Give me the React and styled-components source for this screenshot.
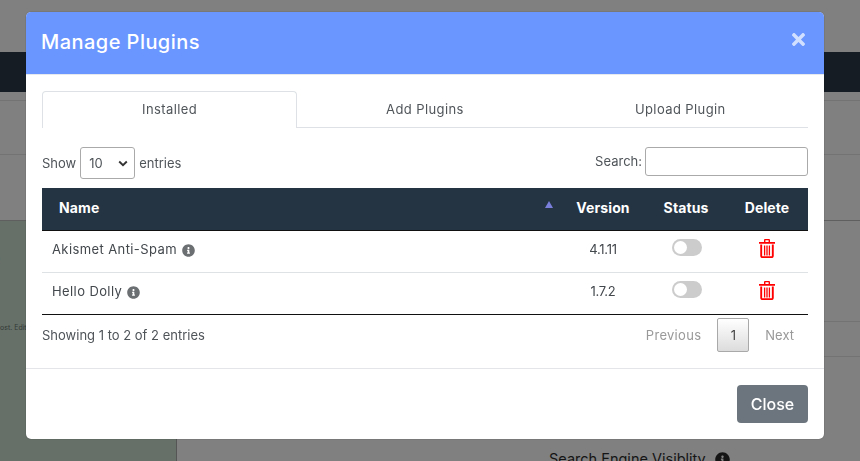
import React from "react";
import styled, { createGlobalStyle } from "styled-components";
import { FaInfoCircle, FaTimes } from "react-icons/fa";

const GlobalStyle = createGlobalStyle`
	html, body {
		margin: 0;
		padding: 0;
		height: 100%;
		overflow: hidden;
		background: #808080;
		font-family: Inter, "Noto Sans", sans-serif;
	}
`;

// Page behind the dimmed backdrop
const Page = styled.div`
	height: 461px;
	padding-top: 52px;
	box-sizing: border-box;
	background: #808080;
	display: flex;
	flex-direction: column;
	overflow: hidden;
`;

const NavBar = styled.div`
	flex: none;
	height: 40px;
	background: #151c23;
`;

const PageStrip = styled.div`
	flex: none;
	height: ${(p) => p.$height}px;
	border-bottom: 1px solid #737373;
`;

const PageBody = styled.div`
	flex: none;
	height: 240px;
	margin-top: 65px;
	display: flex;
	border-top: 1px solid #5f5f5f;
`;

const SidePanel = styled.div`
	flex: none;
	width: 177px;
	background: #667069;
	border-right: 1px solid #555;
	font-size: 7px;
	line-height: 9px;
	color: #333a36;
	padding-top: 32px;
	box-sizing: border-box;
	white-space: nowrap;
	overflow: hidden;
`;

const PanelText = styled.div`
	margin-top: ${(p) => p.$gap || 0}px;
	margin-left: ${(p) => p.$indent || 0}px;
`;

const PageMain = styled.div`
	flex: 1;
	display: flex;
	flex-direction: column;
`;

const MainLine = styled.div`
	flex: none;
	height: ${(p) => p.$height}px;
	border-bottom: 1px solid #737373;
`;

const VisibilityLabel = styled.div`
	margin: 92px 0 0 372px;
	display: flex;
	align-items: center;
	gap: 9px;
	font-size: 14.5px;
	line-height: 20px;
	color: #151515;
	white-space: nowrap;
`;

// Modal
const Overlay = styled.div`
	position: fixed;
	inset: 0;
`;

const Modal = styled.div`
	position: absolute;
	left: 26px;
	top: 12px;
	width: 798px;
	height: 427px;
	background: #fff;
	border-radius: 5px;
	overflow: hidden;
	box-shadow: 0 0 1px rgba(0, 0, 0, 0.6);
	display: flex;
	flex-direction: column;
	color: #4f5459;
`;

const ModalHeader = styled.div`
	flex: none;
	height: 63px;
	background: #6a96ff;
	display: flex;
	justify-content: space-between;
	padding: 0 16px 0 15px;
	border-bottom: 1px solid #e6e9ee;
	box-sizing: border-box;
`;

const ModalTitle = styled.h4`
	margin: 0;
	font-size: 20px;
	font-weight: 500;
	line-height: 61px;
	color: #fff;
	letter-spacing: 0.45px;
`;

const CloseX = styled.button`
	border: 0;
	padding: 0;
	background: none;
	color: rgba(255, 255, 255, 0.7);
	height: 19px;
	margin-top: 18px;
	font-size: 19px;
	display: flex;
`;

const ModalBody = styled.div`
	flex: none;
	height: 294px;
	padding: 16px 16px 0;
	box-sizing: border-box;
	border-bottom: 1px solid #e3e5e8;
`;

const Tabs = styled.div`
	display: grid;
	grid-template-columns: repeat(3, 1fr);
	height: 37px;
	border-bottom: 1px solid #dee2e6;
	box-sizing: border-box;
`;

const Tab = styled.div`
	display: flex;
	align-items: center;
	justify-content: center;
	font-size: 13px;
	letter-spacing: 0.4px;
	color: #50555a;
	height: ${(p) => (p.$active ? "37px" : "36px")};
	box-sizing: border-box;
	${(p) =>
		p.$active &&
		`
		background: #fff;
		border: 1px solid #dee2e6;
		border-bottom: 0;
		border-radius: 4px 4px 0 0;
		padding-bottom: 2px;
	`}
`;

const Controls = styled.div`
	display: flex;
	justify-content: space-between;
	margin-top: 19px;
	height: 41px;
	font-size: 13px;
`;

const LengthLabel = styled.label`
	display: flex;
	align-items: center;
	gap: 4px;
	height: 32px;
`;

const FakeSelect = styled.div`
	width: 55px;
	height: 32px;
	box-sizing: border-box;
	border: 1px solid #aaa;
	border-radius: 3px;
	padding: 0 6px 0 8px;
	display: flex;
	align-items: center;
	justify-content: space-between;
	font-size: 13px;
`;

const SearchLabel = styled.label`
	display: flex;
	align-items: flex-start;
	gap: 3px;
	line-height: 28px;
`;

const SearchInput = styled.input`
	width: 163px;
	height: 29px;
	box-sizing: border-box;
	border: 1px solid #aaa;
	border-radius: 3px;
	padding: 0;
	outline: 0;
`;

const Table = styled.table`
	width: 766px;
	table-layout: fixed;
	border-collapse: collapse;
	font-size: 13px;
	border-bottom: 1px solid #111;
`;

const HeadCell = styled.th`
	position: relative;
	height: 42px;
	padding: 0 0 2px ${(p) => (p.$first ? "17px" : "0")};
	box-sizing: border-box;
	background: #253443;
	color: #fff;
	font-size: 14px;
	font-weight: 700;
	letter-spacing: 0.1px;
	text-align: ${(p) => (p.$first ? "left" : "center")};
	width: ${(p) => p.$width}px;
	border-bottom: 1px solid #111;
`;

const SortArrow = styled.span`
	position: absolute;
	right: 7px;
	top: 13px;
	width: 0;
	height: 0;
	border-left: 4.5px solid transparent;
	border-right: 4.5px solid transparent;
	border-bottom: 7px solid #7a7fdc;
`;

const Row = styled.tr`
	& + & td {
		border-top: 1px solid #dfe2e5;
	}
`;

const Cell = styled.td`
	height: 42px;
	padding: 0 0 4px ${(p) => (p.$first ? "10px" : "0")};
	box-sizing: border-box;
	text-align: ${(p) => (p.$first ? "left" : "center")};
	color: #43484d;
`;

const VersionText = styled.span`
	letter-spacing: -0.3px;
`;

const PluginName = styled.span`
	display: inline-flex;
	align-items: center;
	gap: 5px;
	letter-spacing: 0.4px;
	svg {
		color: #6c6f72;
		font-size: 13px;
		margin-top: 3px;
	}
`;

const Toggle = styled.span`
	display: inline-block;
	position: relative;
	width: 30px;
	height: 17px;
	border-radius: 9px;
	background: #ccc;
	vertical-align: middle;
	margin: 0 0 3px 2px;

	&::before {
		content: "";
		position: absolute;
		left: 2px;
		top: 2px;
		width: 13px;
		height: 13px;
		border-radius: 50%;
		background: #fff;
	}
`;

const TrashIcon = styled.svg`
	display: block;
	margin: 0 auto 2px;
	color: #ff0000;
`;

const TableFooter = styled.div`
	display: flex;
	justify-content: space-between;
	font-size: 13px;
`;

const Info = styled.div`
	line-height: 40px;
`;

const Pagination = styled.div`
	display: flex;
	align-items: center;
	gap: 16px;
	margin-top: 3px;
	padding-right: 14px;
	height: 34px;
	color: #999;
`;

const PageLink = styled.span`
	letter-spacing: ${(p) => p.$spacing || 0}px;
`;

const PageNumber = styled.span`
	width: 32px;
	height: 34px;
	box-sizing: border-box;
	border: 1px solid #a9a9a9;
	border-radius: 2px;
	background: linear-gradient(#fff, #dcdcdc);
	color: #444;
	display: flex;
	align-items: center;
	justify-content: center;
`;

const ModalFooter = styled.div`
	flex: 1;
	display: flex;
	justify-content: flex-end;
	padding: 16px 16px 0;
`;

const CloseButton = styled.button`
	width: 71px;
	height: 38px;
	border: 0;
	border-radius: 4px;
	background: #6c757d;
	color: #fff;
	font-family: inherit;
	font-size: 16px;
	font-weight: 500;
	padding: 0 0 1px;
`;

const plugins = [
	{ name: "Akismet Anti-Spam", version: "4.1.11" },
	{ name: "Hello Dolly", version: "1.7.2" },
];

const Trash = () => (
	<TrashIcon width="16" height="19" viewBox="0 0 16 19">
		<path d="M0 3h16v1.8H0zM5 3V1.2C5 .5 5.5 0 6.2 0h3.6c.7 0 1.2.5 1.2 1.2V3H9.6V1.3H6.4V3z" fill="currentColor" />
		<path
			d="M2.2 5.5v11.6c0 .6.4 1 1 1h9.6c.6 0 1-.4 1-1V5.5"
			fill="none"
			stroke="currentColor"
			strokeWidth="1.9"
		/>
		<path d="M5.6 6.5v10M8 6.5v10M10.4 6.5v10" stroke="currentColor" strokeWidth="1.3" />
	</TrashIcon>
);

export default function App() {
	return (
		<>
			<GlobalStyle />
			<Page>
				<NavBar />
				<PageStrip $height={8} />
				<PageStrip $height={53} />
				<PageBody>
					<SidePanel>
						<PanelText $indent={-4}>n</PanelText>
						<PanelText $gap={61}>ost. Edit o</PanelText>
					</SidePanel>
					<PageMain>
						<MainLine $height={100} />
						<MainLine $height={34} />
						<VisibilityLabel>
							Search Engine Visiblity <FaInfoCircle size={15} />
						</VisibilityLabel>
					</PageMain>
				</PageBody>
			</Page>
			<Overlay>
				<Modal>
					<ModalHeader>
						<ModalTitle>Manage Plugins</ModalTitle>
						<CloseX>
							<FaTimes />
						</CloseX>
					</ModalHeader>
					<ModalBody>
						<Tabs>
							<Tab $active>Installed</Tab>
							<Tab>Add Plugins</Tab>
							<Tab>Upload Plugin</Tab>
						</Tabs>
						<Controls>
							<LengthLabel>
								Show
								<FakeSelect>
									10
									<svg width="10" height="7" viewBox="0 0 10 7">
										<path d="M1.2 1.5 5 5.2l3.8-3.7" fill="none" stroke="#333" strokeWidth="1.9" />
									</svg>
								</FakeSelect>
								entries
							</LengthLabel>
							<SearchLabel>
								Search:
								<SearchInput type="text" />
							</SearchLabel>
						</Controls>
						<Table>
							<thead>
								<tr>
									<HeadCell $first $width={518}>
										Name
										<SortArrow />
									</HeadCell>
									<HeadCell $width={86}>Version</HeadCell>
									<HeadCell $width={80}>Status</HeadCell>
									<HeadCell $width={82}>Delete</HeadCell>
								</tr>
							</thead>
							<tbody>
								{plugins.map((plugin) => (
									<Row key={plugin.name}>
										<Cell $first>
											<PluginName>
												{plugin.name} <FaInfoCircle />
											</PluginName>
										</Cell>
										<Cell>
											<VersionText>{plugin.version}</VersionText>
										</Cell>
										<Cell>
											<Toggle />
										</Cell>
										<Cell>
											<Trash />
										</Cell>
									</Row>
								))}
							</tbody>
						</Table>
						<TableFooter>
							<Info>Showing 1 to 2 of 2 entries</Info>
							<Pagination>
								<PageLink $spacing={0.3}>Previous</PageLink>
								<PageNumber>1</PageNumber>
								<PageLink>Next</PageLink>
							</Pagination>
						</TableFooter>
					</ModalBody>
					<ModalFooter>
						<CloseButton>Close</CloseButton>
					</ModalFooter>
				</Modal>
			</Overlay>
		</>
	);
}
